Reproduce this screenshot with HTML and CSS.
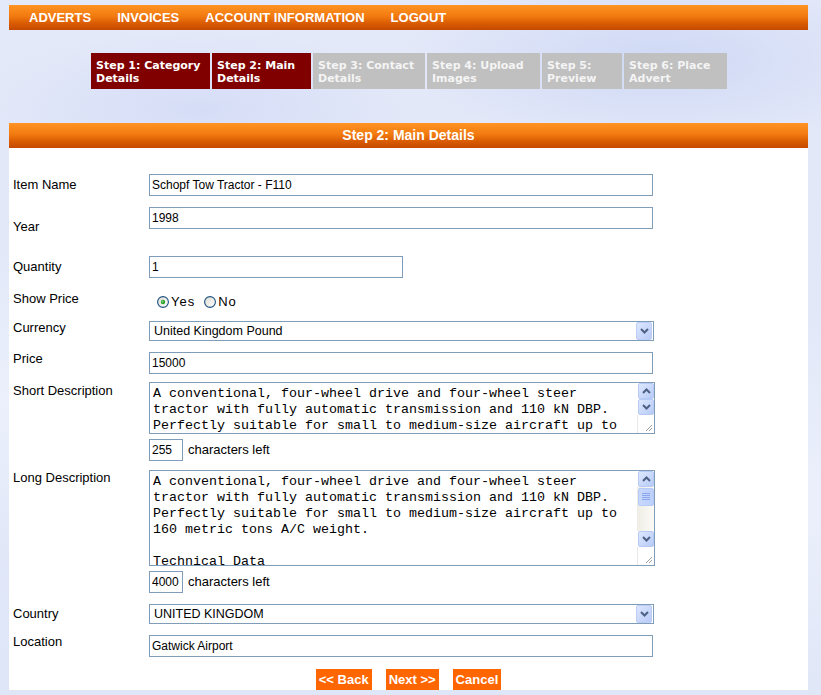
FILE: index.html
```html
<!DOCTYPE html>
<html lang="en">
<head>
<meta charset="utf-8">
<title>Step 2: Main Details</title>
<link rel="stylesheet" href="styles.css">
</head>
<body>
<div class="page">
  <nav class="topnav">
    <a class="nav-link" href="#">ADVERTS</a>
    <a class="nav-link" href="#">INVOICES</a>
    <a class="nav-link" href="#">ACCOUNT INFORMATION</a>
    <a class="nav-link" href="#">LOGOUT</a>
  </nav>

  <div class="steps">
    <div class="step step-on w1">Step 1: Category Details</div>
    <div class="step step-on w2">Step 2: Main Details</div>
    <div class="step step-off w3">Step 3: Contact Details</div>
    <div class="step step-off w4">Step 4: Upload Images</div>
    <div class="step step-off w5">Step 5: Preview</div>
    <div class="step step-off w6">Step 6: Place Advert</div>
  </div>

  <div class="panel">
    <div class="panel-head">Step 2: Main Details</div>
    <form class="form">
      <div class="row r-item">
        <label class="lbl pt4">Item Name</label>
        <input class="txt wide" type="text" value="Schopf Tow Tractor - F110">
      </div>
      <div class="row r-year">
        <label class="lbl pt13">Year</label>
        <input class="txt wide" type="text" value="1998">
      </div>
      <div class="row r-qty">
        <label class="lbl pt4">Quantity</label>
        <input class="txt half" type="text" value="1">
      </div>
      <div class="row r-show">
        <label class="lbl pt1">Show Price</label>
        <div class="radios">
          <span class="radio">
            <svg width="12" height="12" viewBox="0 0 12 12"><defs><linearGradient id="rg1" x1="0" y1="0" x2="1" y2="1"><stop offset="0" stop-color="#dcdad2"/><stop offset="1" stop-color="#ffffff"/></linearGradient></defs><circle cx="6" cy="6" r="5.4" fill="url(#rg1)" stroke="#1c5180" stroke-width="1.1"/><circle cx="6" cy="6" r="2.2" fill="#2ba52b"/><circle cx="5.5" cy="5.5" r="0.9" fill="#7fd67f"/></svg>
          </span>
          <span class="radio-text">Yes</span>
          <span class="radio gap">
            <svg width="12" height="12" viewBox="0 0 12 12"><defs><linearGradient id="rg2" x1="0" y1="0" x2="1" y2="1"><stop offset="0" stop-color="#dcdad2"/><stop offset="1" stop-color="#ffffff"/></linearGradient></defs><circle cx="6" cy="6" r="5.4" fill="url(#rg2)" stroke="#1c5180" stroke-width="1.1"/></svg>
          </span>
          <span class="radio-text">No</span>
        </div>
      </div>
      <div class="row r-cur">
        <label class="lbl pt0">Currency</label>
        <div class="select">
          <select class="sel"><option>United Kingdom Pound</option></select>
          <span class="dd"><svg width="9" height="6" viewBox="0 0 9 6"><path d="M1 1 L4.5 4.5 L8 1" fill="none" stroke="#4d6185" stroke-width="2"/></svg></span>
        </div>
      </div>
      <div class="row r-price">
        <label class="lbl pt0">Price</label>
        <input class="txt wide" type="text" value="15000">
      </div>
      <div class="row r-short">
        <label class="lbl pt2">Short Description</label>
        <div class="ta ta-short">
          <textarea class="ta-text">A conventional, four-wheel drive and four-wheel steer tractor with fully automatic transmission and 110 kN DBP. Perfectly suitable for small to medium-size aircraft up to 160 metric tons A/C weight.</textarea>
          <div class="sb">
            <span class="sbtn"><svg width="9" height="6" viewBox="0 0 9 6"><path d="M1 5 L4.5 1.5 L8 5" fill="none" stroke="#4d6185" stroke-width="2"/></svg></span>
            <span class="sbtn"><svg width="9" height="6" viewBox="0 0 9 6"><path d="M1 1 L4.5 4.5 L8 1" fill="none" stroke="#4d6185" stroke-width="2"/></svg></span>
            <span class="grip"><svg width="8" height="8" viewBox="0 0 8 8"><path d="M7 1 L1 7 M7 4 L4 7" stroke="#a0a0a0" stroke-width="1"/></svg></span>
          </div>
        </div>
      </div>
      <div class="row r-count1">
        <span class="lbl"></span>
        <input class="txt count" type="text" value="255">
        <span class="count-text">characters left</span>
      </div>
      <div class="row r-long">
        <label class="lbl pt1">Long Description</label>
        <div class="ta ta-long">
          <textarea class="ta-text">A conventional, four-wheel drive and four-wheel steer tractor with fully automatic transmission and 110 kN DBP. Perfectly suitable for small to medium-size aircraft up to 160 metric tons A/C weight.

Technical Data</textarea>
          <div class="sb">
            <span class="sbtn"><svg width="9" height="6" viewBox="0 0 9 6"><path d="M1 5 L4.5 1.5 L8 5" fill="none" stroke="#4d6185" stroke-width="2"/></svg></span>
            <span class="track">
              <span class="thumb"><svg width="8" height="8" viewBox="0 0 8 8"><path d="M0 0.5 H8 M0 2.5 H8 M0 4.5 H8 M0 6.5 H8" stroke="#8aa6ee" stroke-width="1"/></svg></span>
            </span>
            <span class="sbtn"><svg width="9" height="6" viewBox="0 0 9 6"><path d="M1 1 L4.5 4.5 L8 1" fill="none" stroke="#4d6185" stroke-width="2"/></svg></span>
            <span class="grip"><svg width="8" height="8" viewBox="0 0 8 8"><path d="M7 1 L1 7 M7 4 L4 7" stroke="#a0a0a0" stroke-width="1"/></svg></span>
          </div>
        </div>
      </div>
      <div class="row r-count2">
        <span class="lbl"></span>
        <input class="txt count" type="text" value="4000">
        <span class="count-text">characters left</span>
      </div>
      <div class="row r-country">
        <label class="lbl pt3">Country</label>
        <div class="select">
          <select class="sel"><option>UNITED KINGDOM</option></select>
          <span class="dd"><svg width="9" height="6" viewBox="0 0 9 6"><path d="M1 1 L4.5 4.5 L8 1" fill="none" stroke="#4d6185" stroke-width="2"/></svg></span>
        </div>
      </div>
      <div class="row r-loc">
        <label class="lbl pt0">Location</label>
        <input class="txt wide" type="text" value="Gatwick Airport">
      </div>
      <div class="buttons">
        <button class="btn" type="button">&lt;&lt; Back</button>
        <button class="btn" type="button">Next &gt;&gt;</button>
        <button class="btn" type="button">Cancel</button>
      </div>
    </form>
  </div>
</div>
</body>
</html>
```

FILE: styles.css
```css
* { box-sizing: border-box; }

html, body { height: 100%; }

body {
  margin: 0;
  font-family: "Liberation Sans", Arial, sans-serif;
  color: #000;
  background:
    radial-gradient(ellipse 260px 90px at 660px 60px, rgba(205, 215, 245, 0.9), rgba(205, 215, 245, 0)),
    radial-gradient(ellipse 220px 80px at 200px 110px, rgba(210, 218, 246, 0.8), rgba(210, 218, 246, 0)),
    radial-gradient(ellipse 200px 160px at 0px 400px, rgba(236, 240, 252, 1), rgba(236, 240, 252, 0)),
    radial-gradient(ellipse 160px 200px at 821px 500px, rgba(236, 240, 252, 1), rgba(236, 240, 252, 0)),
    linear-gradient(#e4e9f9, #dfe6f7);
  overflow: hidden;
}

.page {
  width: 799px;
  margin: 0 0 0 9px;
  padding-top: 5px;
}

/* top navigation */
.topnav {
  display: flex;
  align-items: center;
  height: 25px;
  padding-left: 20px;
  gap: 26px;
  background: linear-gradient(#ff9424 0%, #f27a10 45%, #d85a02 75%, #c44a00 100%);
}

.nav-link {
  color: #fff;
  font-weight: bold;
  font-size: 13px;
  text-decoration: none;
  line-height: 25px;
}

/* steps */
.steps {
  display: flex;
  gap: 2px;
  margin: 23px 0 0 82px;
  height: 36px;
}

.step {
  height: 36px;
  padding: 6px 4px 0 5px;
  font-family: "DejaVu Sans", Verdana, sans-serif;
  font-weight: bold;
  font-size: 11px;
  line-height: 13px;
  color: #fff;
}

.step-on { background: #800000; }
.step-off { background: #c0c0c0; color: #f4f4f4; }

.w1 { width: 119px; }
.w2 { width: 99px; }
.w3 { width: 112px; }
.w4 { width: 113px; }
.w5 { width: 80px; }
.w6 { width: 103px; }

/* panel */
.panel {
  margin-top: 34px;
  background: #fff;
}

.panel-head {
  height: 25px;
  line-height: 25px;
  text-align: center;
  color: #fff;
  font-weight: bold;
  font-size: 14px;
  background: linear-gradient(#ff9424 0%, #f27a10 45%, #d85a02 75%, #c44a00 100%);
}

.form {
  padding-top: 26px;
  margin: 0;
}

.row {
  display: flex;
  align-items: flex-start;
}

.r-item { height: 33px; }
.r-year { height: 49px; }
.r-qty { height: 35px; }
.r-show { height: 30px; }
.r-cur { height: 31px; }
.r-price { height: 30px; }
.r-short { height: 57px; }
.r-count1 { height: 31px; }
.r-long { height: 101px; }
.r-count2 { height: 33px; }
.r-country { height: 31px; }
.r-loc { height: 34px; }

.lbl {
  flex: 0 0 140px;
  width: 140px;
  padding-left: 4px;
  font-size: 13px;
  line-height: 14px;
}

.pt0 { padding-top: 0; }
.pt1 { padding-top: 1px; }
.pt2 { padding-top: 2px; }
.pt3 { padding-top: 3px; }
.pt4 { padding-top: 4px; }
.pt13 { padding-top: 13px; }

.txt {
  height: 22px;
  border: 1px solid #7f9db9;
  padding: 0 2px;
  margin: 0;
  font-family: "Liberation Sans", Arial, sans-serif;
  font-size: 12px;
  color: #000;
  background: #fff;
  outline: none;
}

.wide { width: 504px; }
.half { width: 254px; }
.count { width: 34px; }

.count-text {
  margin-left: 5px;
  font-size: 13px;
  line-height: 22px;
}

/* radios */
.radios {
  display: flex;
  align-items: center;
  margin-top: 4px;
  padding-left: 8px;
  height: 14px;
  font-size: 13px;
  letter-spacing: 1px;
}

.radio { display: flex; width: 12px; height: 12px; margin-right: 2px; }
.radio.gap { margin-left: 9px; }
.radio-text { line-height: 14px; }

/* selects */
.select {
  display: flex;
  width: 505px;
  height: 20px;
  border: 1px solid #7f9db9;
  background: #fff;
}

.sel {
  flex: 1;
  appearance: none;
  -webkit-appearance: none;
  border: none;
  background: transparent;
  height: 18px;
  padding: 0 0 0 4px;
  margin: 0;
  font-family: "Liberation Sans", Arial, sans-serif;
  font-size: 12.5px;
  color: #000;
  outline: none;
}

.dd {
  width: 16px;
  height: 18px;
  margin-right: 1px;
  display: flex;
  align-items: center;
  justify-content: center;
  border: 1px solid #bccdf6;
  border-radius: 2px;
  background: linear-gradient(135deg, #dce6fe, #b9cbf7);
}

/* textareas */
.ta {
  display: flex;
  width: 506px;
  border: 1px solid #7f9db9;
  background: #fff;
}

.ta-short { height: 52px; }
.ta-long { height: 96px; }

.ta-text {
  flex: 1;
  height: 100%;
  border: none;
  margin: 0;
  padding: 3px 0 0 3px;
  resize: none;
  overflow: hidden;
  font-family: "Liberation Mono", "Courier New", monospace;
  font-size: 13.333px;
  line-height: 16px;
  color: #000;
  outline: none;
  background: #fff;
}

.sb {
  display: flex;
  flex-direction: column;
  width: 17px;
  height: 100%;
}

.sbtn {
  flex: 0 0 16px;
  display: flex;
  align-items: center;
  justify-content: center;
  margin-left: 1px;
  border: 1px solid #b7caf5;
  border-radius: 2px;
  background: linear-gradient(135deg, #dde7fe, #b8cbf7);
}

.track {
  flex: 1;
  display: flex;
  flex-direction: column;
  padding-top: 1px;
  background: linear-gradient(90deg, #eeede5, #fbfaf6);
}

.thumb {
  height: 18px;
  margin-left: 1px;
  display: flex;
  align-items: center;
  justify-content: center;
  border: 1px solid #b7caf5;
  border-radius: 2px;
  background: linear-gradient(90deg, #c9d8fd, #bcd0fb);
}

.grip {
  flex: 0 0 18px;
  display: flex;
  align-items: flex-end;
  justify-content: flex-end;
  padding: 0 1px 1px 0;
  border-left: 1px solid #e8e8e8;
  background: #fff;
}

/* buttons */
.buttons {
  display: flex;
  justify-content: center;
  gap: 14px;
  height: 21px;
}

.btn {
  height: 21px;
  padding: 0 3px;
  border: none;
  margin: 0;
  background: #ff6600;
  color: #fff;
  font-family: "Liberation Sans", Arial, sans-serif;
  font-weight: bold;
  font-size: 13px;
  line-height: 21px;
}
```
